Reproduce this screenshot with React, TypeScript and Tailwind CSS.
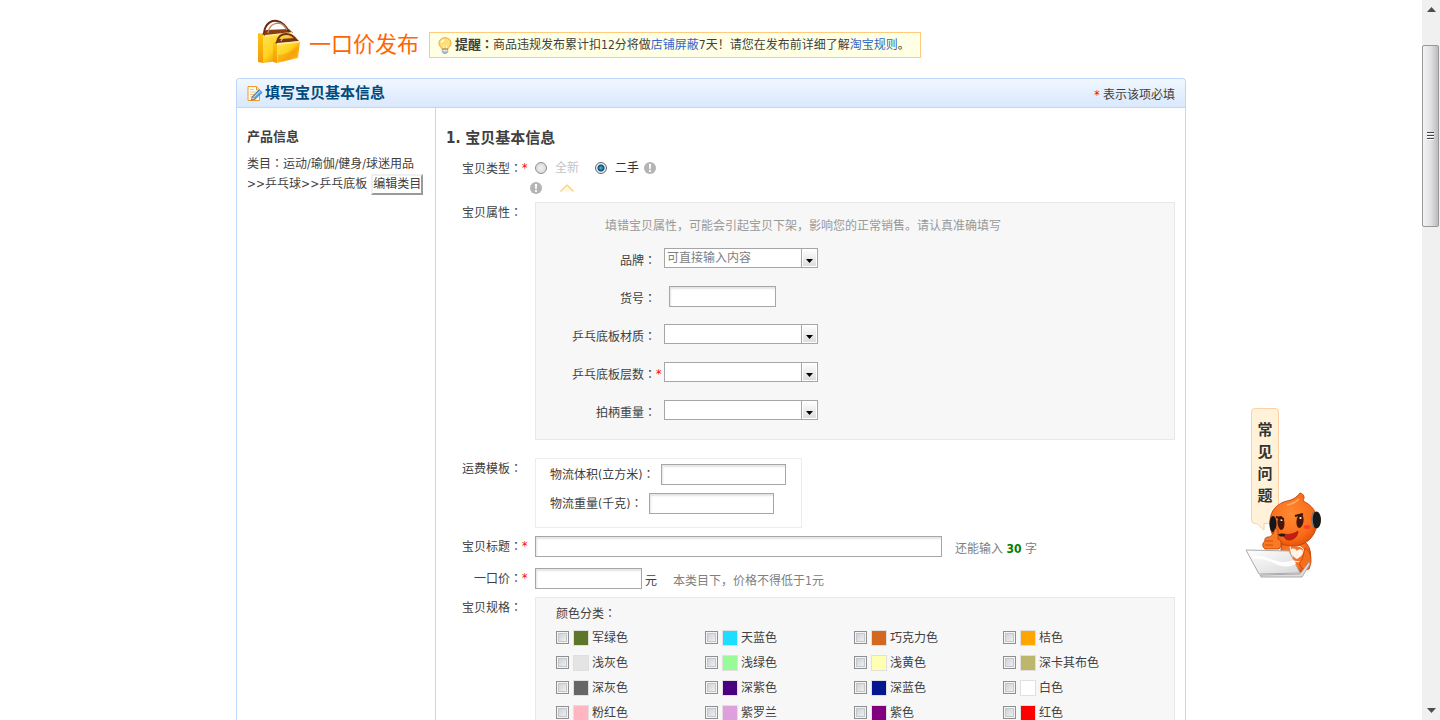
import type { ReactNode } from "react";

const FIELD =
  "h-[21px] rounded-none border border-[#a6a6a6] bg-white px-1 text-xs shadow-[inset_1px_2px_2px_#e4e4e4] outline-none";

function Colon() {
  return <span className="font-['Noto_Sans_CJK_TC',sans-serif]">：</span>;
}

function Star() {
  return <span className="text-[#f00]">*</span>;
}

function Info() {
  return (
    <svg width="12" height="12" viewBox="0 0 12 12" aria-hidden="true" className="shrink-0">
      <circle cx="6" cy="6" r="6" fill="#b4b4b4" />
      <path d="M4.9 2h2.2l-.4 4.9H5.3z" fill="#fff" />
      <circle cx="6" cy="8.9" r="1.1" fill="#fff" />
    </svg>
  );
}

function Bags() {
  return (
    <svg width="44" height="46" viewBox="0 0 44 46" aria-hidden="true" className="mb-1.5 shrink-0">
      <defs>
        <linearGradient id="bagFront" x1="0" y1="0" x2="1" y2="1">
          <stop offset="0" stopColor="#ffe45c" />
          <stop offset=".45" stopColor="#ffd21c" />
          <stop offset=".62" stopColor="#f8a80c" />
          <stop offset="1" stopColor="#ffd94a" />
        </linearGradient>
        <linearGradient id="bagSide" x1="0" y1="0" x2="0" y2="1">
          <stop offset="0" stopColor="#ffc411" />
          <stop offset="1" stopColor="#f19a06" />
        </linearGradient>
      </defs>
      <path d="M1 14l5 1v29l-5-1z" fill="url(#bagSide)" />
      <path d="M6 15l28-2 2 4v23L6 44z" fill="url(#bagFront)" />
      <path d="M5 15l4-4 23-1 4 4-28 3z" fill="#8a3e12" />
      <path d="M8 16l27-3v2L8 18z" fill="#ffe98a" />
      <path d="M7 14C8 4 15 1 20 2c5 1 9 5 12 11" fill="none" stroke="#6c2a10" strokeWidth="2" />
      <path d="M11 14c1-7 6-10 11-10 4 1 6 3 8 7" fill="none" stroke="#b9886a" strokeWidth="1.3" />
      <path d="M16 23l4 1v20l-4-1z" fill="url(#bagSide)" />
      <path d="M20 24l21-2 2 1-2 16-21 5z" fill="url(#bagFront)" />
      <path d="M18 24l4-4 17-1 3 3-21 3z" fill="#7b3210" />
      <path d="M20 24l22-2v1.500l-22 2.500z" fill="#fff0a0" />
      <path d="M20 23c1-5 4-8 9-8s8 2 10 6" fill="none" stroke="#762e0c" strokeWidth="2" />
      <path d="M24 22c1-3 4-5 8-4" fill="none" stroke="#e0c3a4" strokeWidth="1.2" />
      <path d="M21 36c8 0 14-4 20-9l-1 11-19 5z" fill="#f5a00b" opacity=".6" />
    </svg>
  );
}

function Bulb() {
  return (
    <svg width="14" height="17" viewBox="0 0 14 17" aria-hidden="true" className="shrink-0">
      <path d="M7 .7C3.400.7 1 3.200 1 6.200c0 2.500 1.900 3.600 2.800 5.500h6.400C11.100 9.800 13 8.700 13 6.200 13 3.200 10.600.7 7 .7z" fill="#ffdf75" stroke="#eda632" />
      <path d="M6.500 2.300C4 2.600 2.900 4.100 2.800 6.100c1.300 0 3.700-1.500 3.700-3.800z" fill="#fffbe4" />
      <path d="M5.500 11V7.500M8.500 11V7.500" stroke="#fff3b0" />
      <path d="M4.300 12.200h5.400v2.600l-1.200 1.500h-3l-1.200-1.500z" fill="#aac0d4" stroke="#7590aa" strokeWidth=".8" />
      <path d="M4.500 13.700h5" stroke="#eef5fa" />
    </svg>
  );
}

function NoteIcon() {
  return (
    <svg width="16" height="17" viewBox="0 0 16 17" aria-hidden="true" className="shrink-0">
      <path d="M1 1.500h8.500L12.500 5v10.500H1z" fill="#fffdf2" stroke="#ef9a2c" />
      <path d="M9.500 1.500V5h3" fill="#ffe2a3" stroke="#ef9a2c" />
      <path d="M3 4.500h4M3 7h7M3 9.500h5M3 12h3" stroke="#f6c27d" />
      <path d="M5.500 11.200L12.300 4.800l2.700 2.700-6.700 6.500-3.600 1z" fill="#54a8e2" stroke="#2a72ae" strokeWidth=".8" />
      <path d="M6.800 12.200l6.600-6.300" stroke="#c3e6fb" />
      <path d="M5.500 11.200l2.800 2.800-3.600 1z" fill="#f4d9a8" stroke="#6d6d6d" strokeWidth=".6" />
    </svg>
  );
}

function Mascot() {
  return (
    <svg width="78" height="86" viewBox="0 0 78 86" aria-hidden="true" className="absolute top-[84px] -left-[6px]">
      <defs>
        <radialGradient id="skin" cx=".45" cy=".4" r=".65">
          <stop offset="0" stopColor="#ff8a35" />
          <stop offset=".7" stopColor="#f96c17" />
          <stop offset="1" stopColor="#e04e08" />
        </radialGradient>
        <linearGradient id="lid" x1="0" y1="0" x2="1" y2="1">
          <stop offset="0" stopColor="#fff" />
          <stop offset=".5" stopColor="#ececec" />
          <stop offset="1" stopColor="#d8d8d8" />
        </linearGradient>
      </defs>
      <path d="M36 50h24c6 5 7 14 4 22l-6 8H36z" fill="url(#skin)" stroke="#b63c08" strokeWidth=".8" />
      <path d="M45 54c6-1 13 0 14 5 1 6-1 9-4 11l-7-1z" fill="#f5742a" stroke="#fff2e6" />
      <path d="M52 67c-5-3-7-6-6-9 1-2 4-2 6 1 2-3 6-2 6 1 0 3-3 5-6 7z" fill="#fff4ea" />
      <path d="M25 30c0-12 8-19 17-21 5-1 9-3 13-8 4 1 5 4 3 8 9 4 14 11 14 20 0 15-11 25-24 25S25 47 25 30z" fill="url(#skin)" stroke="#bd430d" strokeWidth=".9" />
      <path d="M42 13c5-1 9-3 12-6" stroke="#ffad68" strokeWidth="1.500" fill="none" />
      <ellipse cx="28" cy="32" rx="3.500" ry="8" fill="#161616" />
      <ellipse cx="71.500" cy="28" rx="4.500" ry="8.500" fill="#181818" />
      <path d="M68.500 20c-2 5-2 10 0 15" stroke="#77787a" strokeWidth="1.500" fill="none" />
      <ellipse cx="36" cy="31" rx="3.500" ry="7" fill="#4a1608" transform="rotate(-4 36 31)" />
      <ellipse cx="55" cy="29" rx="3.500" ry="7" fill="#4a1608" transform="rotate(8 55 29)" />
      <circle cx="36.500" cy="28" r="1.100" fill="#fff" />
      <circle cx="55.500" cy="26" r="1.100" fill="#fff" />
      <path d="M31 25l8 2M50 24l8-2" stroke="#32180f" strokeWidth="2" fill="none" />
      <path d="M38 42c6 1 11 0 15-3 0 5-4 9-9 9-3 0-5-2-6-6z" fill="#c91b15" stroke="#87200c" strokeWidth=".7" />
      <ellipse cx="62" cy="35" rx="3.500" ry="2" fill="#f7432b" />
      <path d="M28 40c3 3 6 3 9 2" stroke="#27211e" strokeWidth="1.200" fill="none" />
      <ellipse cx="37" cy="43" rx="3" ry="1.500" fill="#221b17" />
      <path d="M30 37c2-1 3 0 3 2v8c4 1 4 7 1 10H20c-3-2-3-6 0-8-1-2 1-4 3-4 4 0 6-5 7-8z" fill="#fb7924" stroke="#b63f0a" strokeWidth=".8" />
      <path d="M20 49h8M20 53h8" stroke="#c95313" />
      <path d="M60 56c6 4 8 12 4 21l-4 1c-6-3-7-8-3-10z" fill="#f66d1b" stroke="#bd430d" strokeWidth=".8" />
      <path d="M15 83l40-1 9-12 1 2-8 13H16z" fill="#dedede" stroke="#999" strokeWidth=".8" />
      <path d="M1 58l43 1 11 22-41 1z" fill="url(#lid)" stroke="#aaa" />
      <path d="M7 64c12-2 19 5 31 6 5 0 8-1 11-2l2 4c-11 5-16 2-25-2-6-3-12-4-17-3z" fill="#fff" opacity=".9" />
    </svg>
  );
}

function Row({ id, label, star = false, children }: { id?: string; label: string; star?: boolean; children: ReactNode }) {
  const Tag = id ? "label" : "div";
  return (
    <div className="flex items-start">
      <Tag htmlFor={id} className="mr-1.5 flex w-[93px] shrink-0 justify-end pt-0.5 leading-4">
        <span>
          {label}
          <Colon />
        </span>
        <span className="w-[7px]">{star && <Star />}</span>
      </Tag>
      {children}
    </div>
  );
}

function AttrRow({ id, label, star = false, children }: { id: string; label: string; star?: boolean; children: ReactNode }) {
  return (
    <div className="flex h-[21px] items-start">
      <label htmlFor={id} className="flex w-32 shrink-0 justify-end leading-6">
        <span>
          {label}
          <Colon />
        </span>
        <span className="w-2">{star && <Star />}</span>
      </label>
      {children}
    </div>
  );
}

function Combo({ id, text = "" }: { id: string; text?: string }) {
  return (
    <span className="relative block h-5 w-[154px] border border-[#a6a6a6] bg-white">
      <select id={id} className="block h-full w-full appearance-none bg-transparent pr-5 pl-0.5 text-xs leading-[18px] text-[#808080] outline-none">
        <option>{text}</option>
      </select>
      <span className="pointer-events-none absolute inset-y-0 right-0 flex w-4 items-end justify-center border-l border-[#a6a6a6] bg-linear-to-b from-white to-[#dcdcdc] pb-1 ring-1 ring-white ring-inset">
        <svg width="7" height="4" viewBox="0 0 7 4" aria-hidden="true">
          <path d="M0 0h7L3.500 4z" fill="#000" />
        </svg>
      </span>
    </span>
  );
}

const COLORS = [
  ["军绿色", "#5d762a"],
  ["天蓝色", "#1eddff"],
  ["巧克力色", "#d2691e"],
  ["桔色", "#ffa500"],
  ["浅灰色", "#e4e4e4"],
  ["浅绿色", "#98fb98"],
  ["浅黄色", "#ffffb1"],
  ["深卡其布色", "#bdb76b"],
  ["深灰色", "#666666"],
  ["深紫色", "#4b0082"],
  ["深蓝色", "#041690"],
  ["白色", "#ffffff"],
  ["粉红色", "#ffb6c1"],
  ["紫罗兰", "#dda0dd"],
  ["紫色", "#800080"],
  ["红色", "#ff0000"],
];

const RADIO =
  "size-3 appearance-none rounded-full border border-[#8e8f8f] bg-[radial-gradient(#f0f0f0,#d2d2d2)] checked:border-[#5d6b78] checked:bg-[radial-gradient(circle,#4cc0ee_0,#12496f_3px,#e8edf0_4px)]";

export default function App() {
  return (
    <div className="flex h-screen overflow-hidden bg-white font-['DejaVu_Sans_Condensed','Noto_Sans_CJK_SC',sans-serif] text-xs text-[#404040]">
      <div className="relative min-w-0 flex-1">
        <div className="mx-auto max-w-[950px]">
          <header className="flex h-[78px] items-center pt-3 pl-[21px]">
            <Bags />
            <h1 className="ml-2 w-[120px] shrink-0 text-[22px] leading-8 whitespace-nowrap text-[#ff6600]">一口价发布</h1>
            <p className="flex h-[26px] items-center gap-[3px] border border-[#ffcc7f] bg-[#ffffe5] pr-2.5 pl-2 whitespace-nowrap">
              <Bulb />
              <span>
                <b className="text-[13px]">提醒</b>
                <b>
                  <Colon />
                </b>
                商品违规发布累计扣12分将做
                <a href="#shield" className="text-[#3366cc]">店铺屏蔽</a>
                7天！请您在发布前详细了解
                <a href="#rules" className="text-[#3366cc]">淘宝规则</a>。
              </span>
            </p>
          </header>

          <section className="rounded-t border border-b-0 border-[#bdd7f8]">
            <div className="flex h-[29px] items-center justify-between rounded-t border-b border-[#bdd7f8] bg-linear-to-b from-[#f0f7ff] to-[#dae8fc] pr-2.5 pl-2.5">
              <h2 className="flex items-center gap-0.5 text-[15px] leading-5 font-bold text-[#004b7d]">
                <NoteIcon />
                填写宝贝基本信息
              </h2>
              <span className="pt-1">
                <Star /> 表示该项必填
              </span>
            </div>

            <div className="flex min-h-screen items-stretch">
              <aside className="w-[199px] shrink-0 border-r border-[#bdd7f8] pt-[19px] pl-2.5 leading-5">
                <h3 className="mb-1.5 text-[13px] leading-5 font-bold">产品信息</h3>
                <p className="whitespace-nowrap">
                  类目
                  <Colon />
                  运动/瑜伽/健身/球迷用品
                </p>
                <p className="flex h-5 items-center whitespace-nowrap">
                  &gt;&gt;乒乓球&gt;&gt;乒乓底板
                  <button type="button" className="ml-1 h-[21px] border-2 border-[#f0f0f0] border-r-[#9a9a9a] border-b-[#9a9a9a] bg-white leading-4">
                    编辑类目
                  </button>
                </p>
              </aside>

              <form className="min-w-0 flex-1 pt-5 pr-2.5">
                <h3 className="mb-2.5 pl-2.5 text-[15px] leading-5 font-bold">1. 宝贝基本信息</h3>

                <Row label="宝贝类型" star>
                  <div className="h-11">
                    <div className="flex h-5 items-center">
                      <label className="flex items-center gap-2 text-[#c4c4c4]">
                        <input type="radio" name="kind" disabled className={RADIO} />
                        全新
                      </label>
                      <label className="ml-4 flex items-center gap-2 text-[#333]">
                        <input type="radio" name="kind" defaultChecked className={RADIO} />
                        二手
                      </label>
                      <span className="ml-[5px]">
                        <Info />
                      </span>
                    </div>
                    <div className="-ml-[5px] flex h-5 items-center gap-[18px]">
                      <Info />
                      <svg width="14" height="8" viewBox="0 0 14 8" aria-hidden="true">
                        <path d="M.5 7.500L7 1l6.500 6.500" fill="#fffbe0" stroke="#ffc97b" strokeWidth="1.200" />
                      </svg>
                    </div>
                  </div>
                </Row>

                <Row label="宝贝属性">
                  <div className="min-w-0 flex-1 border border-[#e8e8e8] bg-[#f7f7f7] pt-[13px] pb-[18px]">
                    <p className="mb-3 pl-[69px] leading-5 text-[#999]">
                      填错宝贝属性，可能会引起宝贝下架，影响您的正常销售。请认真准确填写
                    </p>
                    <div className="flex flex-col gap-[17px]">
                      <AttrRow id="brand" label="品牌">
                        <Combo id="brand" text="可直接输入内容" />
                      </AttrRow>
                      <AttrRow id="sku" label="货号">
                        <input id="sku" type="text" className={`ml-[5px] w-[107px] ${FIELD}`} />
                      </AttrRow>
                      <AttrRow id="material" label="乒乓底板材质">
                        <Combo id="material" />
                      </AttrRow>
                      <AttrRow id="layers" label="乒乓底板层数" star>
                        <Combo id="layers" />
                      </AttrRow>
                      <AttrRow id="handle" label="拍柄重量">
                        <Combo id="handle" />
                      </AttrRow>
                    </div>
                  </div>
                </Row>

                <div className="mt-[18px]">
                  <Row label="运费模板">
                    <div className="flex flex-col items-start gap-2 border border-[#ececec] pt-[5px] pr-[15px] pb-[13px] pl-3.5">
                      <label className="flex items-center gap-[7px]">
                        <span>
                          物流体积(立方米)
                          <Colon />
                        </span>
                        <input type="text" className={`w-[125px] ${FIELD}`} />
                      </label>
                      <label className="flex items-center gap-[7px]">
                        <span>
                          物流重量(千克)
                          <Colon />
                        </span>
                        <input type="text" className={`w-[125px] ${FIELD}`} />
                      </label>
                    </div>
                  </Row>
                </div>

                <div className="mt-2">
                  <Row id="title" label="宝贝标题" star>
                    <input id="title" type="text" className={`w-[407px] ${FIELD}`} />
                    <span className="ml-[13px] pt-[3px] leading-5 text-[#808080]">
                      还能输入 <b className="text-[#008000]">30</b> 字
                    </span>
                  </Row>
                </div>

                <div className="mt-[9px]">
                  <Row id="price" label="一口价" star>
                    <input id="price" type="text" className={`w-[107px] ${FIELD}`} />
                    <span className="ml-[3px] pt-[3px] leading-5">元</span>
                    <span className="ml-4 pt-[3px] leading-5 text-[#808080]">本类目下，价格不得低于1元</span>
                  </Row>
                </div>

                <div className="mt-1.5">
                  <Row label="宝贝规格">
                    <fieldset className="min-w-0 flex-1 border border-[#e8e8e8] bg-[#f7f7f7] pt-[5px] pb-5 pl-5">
                      <p className="mb-px leading-5">
                        颜色分类
                        <Colon />
                      </p>
                      <div className="grid grid-cols-[repeat(4,149px)]">
                        {COLORS.map(([name, color]) => (
                          <label key={name} className="flex h-[25px] items-center">
                            <input
                              type="checkbox"
                              className="size-[13px] appearance-none border border-[#8e8f8f] bg-linear-to-br from-[#c6cbd2] to-[#f6f6f6] shadow-[inset_0_0_0_1px_#f4f4f4,inset_0_0_0_2px_#c4c8cd] checked:bg-[#3366cc]"
                            />
                            <span className="mr-[3px] ml-1 size-4 border border-[#e0e0e0]" style={{ backgroundColor: color }} />
                            {name}
                          </label>
                        ))}
                      </div>
                    </fieldset>
                  </Row>
                </div>
              </form>
            </div>
          </section>
        </div>

        <a href="#faq" className="absolute top-[408px] right-[143px] block w-7">
          <span className="flex h-[116px] flex-col items-center rounded border border-[#ffcfa6] bg-[#fff2d9] pt-2.5 text-[15px] leading-[22px] font-bold text-[#333]">
            <span>常</span>
            <span>见</span>
            <span>问</span>
            <span>题</span>
          </span>
          <svg width="10" height="8" viewBox="0 0 10 8" aria-hidden="true" className="absolute top-[115px] left-[5px]">
            <path d="M0 0l8 7V0" fill="#fff2d9" stroke="#ffcfa6" />
          </svg>
          <Mascot />
        </a>
      </div>

      <div className="flex w-[18px] shrink-0 flex-col items-center bg-[#f0f0f0] pb-1.5" aria-hidden="true">
        <svg width="9" height="6" viewBox="0 0 9 6" className="mt-[7px]">
          <path d="M0 5l4.500-5L9 5z" fill="#4d4d4d" />
        </svg>
        <div className="mt-8 flex h-[182px] w-[17px] items-center justify-center self-start rounded-xs border border-[#979797] bg-linear-to-r from-[#f4f4f4] via-[#e2e2e5] to-[#bcbcc0]">
          <svg width="7" height="9" viewBox="0 0 7 9">
            <path d="M0 .5h7M0 3.500h7M0 6.500h7" stroke="#444" />
            <path d="M0 1.500h7M0 4.500h7M0 7.500h7" stroke="#fff" />
          </svg>
        </div>
        <svg width="9" height="6" viewBox="0 0 9 6" className="mt-auto">
          <path d="M0 0l4.500 5L9 0z" fill="#4d4d4d" />
        </svg>
      </div>
    </div>
  );
}
